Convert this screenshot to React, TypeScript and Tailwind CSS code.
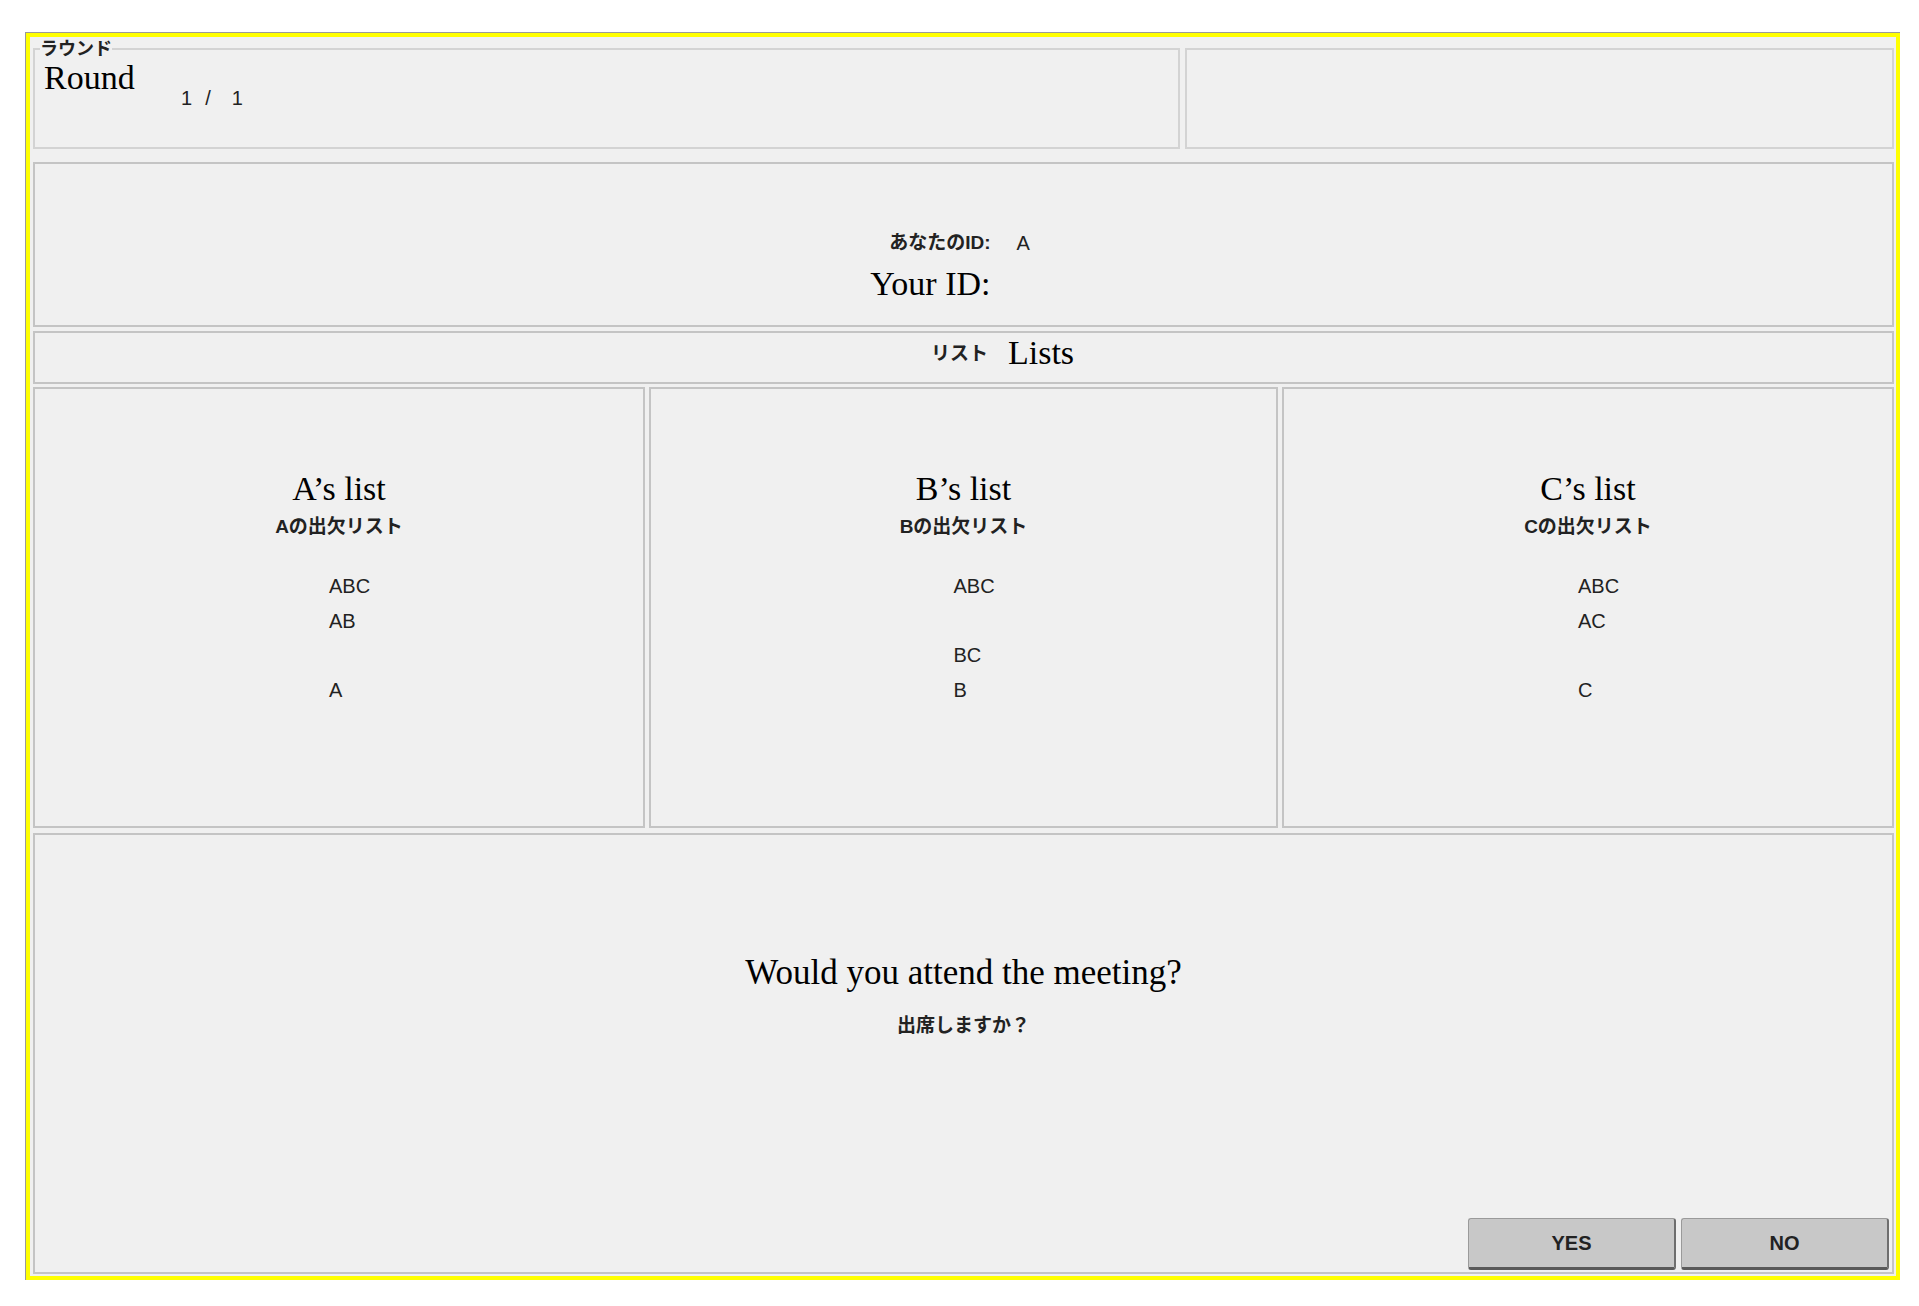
import React from 'react';

const serif = "font-['Liberation_Serif','Times_New_Roman',serif] text-black";
const sans = "font-['Liberation_Sans','Noto_Sans_CJK_JP',sans-serif] text-[#222]";

type ListPanel = {
  title: string;
  jp: string;
  rows: string[];
  width: string;
};

const panels: ListPanel[] = [
  { title: 'A’s list', jp: 'Aの出欠リスト', rows: ['ABC', 'AB', '', 'A'], width: 'w-[612px]' },
  { title: 'B’s list', jp: 'Bの出欠リスト', rows: ['ABC', '', 'BC', 'B'], width: 'w-[629px]' },
  { title: 'C’s list', jp: 'Cの出欠リスト', rows: ['ABC', 'AC', '', 'C'], width: 'w-[612px]' },
];

function Button({ label }: { label: string }) {
  return (
    <button
      className={`${sans} w-[208px] h-[52px] rounded-[3px] bg-[#c8c8c8] border border-[#9a9a9a] border-b-[3px] border-b-[#5a5a5a] border-r-2 border-r-[#6e6e6e] text-[20px] leading-none font-bold text-[#111]`}
    >
      {label}
    </button>
  );
}

export default function App() {
  return (
    <div className="min-h-screen bg-white pt-[32px] pl-[25px]">
      <div className="w-[1875px] h-[1248px] border-l border-t border-[#9a9a9a]">
        <div className="h-full border-4 border-[#ffff00] bg-[#f0f0f0] flex flex-col pt-[3px] pl-[3px] pr-[2px] pb-[2px]">
          {/* round row */}
          <div className="flex gap-[5px] h-[109px]">
            <fieldset className="w-[1147px] h-[109px] border-2 border-[#d3d3d3] pl-[5px]">
              <legend className={`${sans} text-[18px] leading-none font-semibold`}>ラウンド</legend>
              <div className="flex items-start mt-[3px] ml-[4px]">
                <div className={`${serif} text-[34px] leading-none w-[137px]`}>Round</div>
                <div className={`${sans} text-[20px] leading-none mt-[27px] flex`}>
                  <span>1</span>
                  <span className="ml-[13px]">/</span>
                  <span className="ml-[21px]">1</span>
                </div>
              </div>
            </fieldset>
            <div className="w-[709px] h-[101px] mt-[8px] border-2 border-[#d3d3d3]"></div>
          </div>

          {/* your id */}
          <div className="mt-[13px] h-[165px] border-2 border-[#c4c4c4] flex justify-center items-start pt-[69px] pr-[27px]">
            <div className="flex flex-col items-end">
              <div className={`${sans} text-[19px] leading-none font-semibold`}>あなたのID:</div>
              <div className={`${serif} text-[34px] leading-none mt-[15px]`}>Your ID:</div>
            </div>
            <div className={`${sans} text-[20px] leading-none ml-[26px]`}>A</div>
          </div>

          {/* lists header */}
          <div className="mt-[4px] h-[53px] border-2 border-[#c4c4c4] flex justify-center items-start pt-[3px] pl-[78px]">
            <div className="flex items-center gap-[20px]">
              <span className={`${sans} text-[19px] leading-none font-semibold`}>リスト</span>
              <span className={`${serif} text-[34px] leading-none`}>Lists</span>
            </div>
          </div>

          {/* three lists */}
          <div className="mt-[3px] h-[441px] flex gap-[4px]">
            {panels.map((p) => (
              <div key={p.title} className={`${p.width} h-full border-2 border-[#c4c4c4] flex flex-col pt-[83px]`}>
                <div className={`${serif} text-[34px] leading-none text-center`}>{p.title}</div>
                <div className={`${sans} text-[19px] leading-none font-semibold text-center mt-[11px]`}>{p.jp}</div>
                <div className="mt-[33px] ml-[calc(50%-10px)] flex flex-col">
                  {p.rows.map((r, i) => (
                    <div key={i} className={`${sans} text-[20px] leading-[34.6px] h-[34.6px] whitespace-nowrap`}>
                      {r}
                    </div>
                  ))}
                </div>
              </div>
            ))}
          </div>

          {/* question */}
          <div className="mt-[5px] flex-1 border-2 border-[#c4c4c4] flex flex-col pt-[120px]">
            <div className={`${serif} text-[35px] leading-none text-center`}>Would you attend the meeting?</div>
            <div className={`${sans} text-[19px] leading-none font-semibold text-center mt-[26px]`}>出席しますか？</div>
            <div className="mt-auto flex justify-end gap-[5px] pr-[3px] pb-[2px]">
              <Button label="YES" />
              <Button label="NO" />
            </div>
          </div>
        </div>
      </div>
    </div>
  );
}
